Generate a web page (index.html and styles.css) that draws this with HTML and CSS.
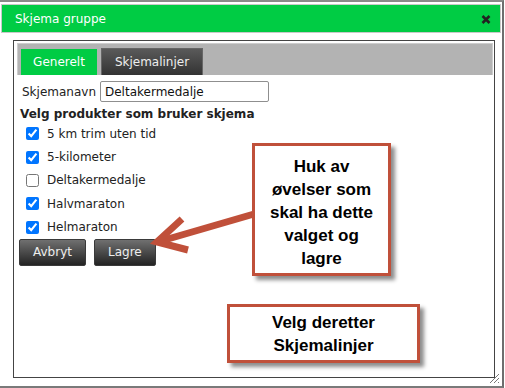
FILE: index.html
```html
<!DOCTYPE html>
<html lang="no">
<head>
    <meta charset="UTF-8">
    <meta name="viewport" content="width=device-width, initial-scale=1.0">
    <title>Skjema gruppe</title>
    <link rel="stylesheet" href="styles.css">
</head>
<body>
    <div class="dialog">
        <div class="titlebar">
            <span class="title">Skjema gruppe</span>
            <svg class="close" width="10" height="9" viewBox="0 0 10 9">
                <path d="M1.5 1 L8.5 8 M8.5 1 L1.5 8" stroke="#222" stroke-width="2.6"/>
            </svg>
        </div>

        <div class="panel">
            <div class="tabs">
                <span class="tab active">Generelt</span>
                <span class="tab">Skjemalinjer</span>
            </div>

            <div class="name-row">
                <label for="skjemanavn">Skjemanavn</label>
                <input id="skjemanavn" class="text-input" type="text" value="Deltakermedalje">
            </div>

            <div class="heading">Velg produkter som bruker skjema</div>

            <ul class="products">
                <li><input type="checkbox" checked><span>5 km trim uten tid</span></li>
                <li><input type="checkbox" checked><span>5-kilometer</span></li>
                <li><input type="checkbox"><span>Deltakermedalje</span></li>
                <li><input type="checkbox" checked><span>Halvmaraton</span></li>
                <li><input type="checkbox" checked><span>Helmaraton</span></li>
            </ul>

            <div class="actions">
                <button class="dark-button">Avbryt</button>
                <button class="dark-button">Lagre</button>
            </div>
        </div>

        <svg class="grip" width="12" height="12" viewBox="0 0 12 12">
            <path d="M11 2 L2 11 M11 6 L6 11 M11 10 L10 11" stroke="#777" stroke-width="1"/>
        </svg>

        <!-- annotasjoner -->
        <svg class="arrow" width="505" height="388" viewBox="0 0 505 388">
            <path d="M254 214 L161 241" stroke="#c0503a" stroke-width="7" fill="none"/>
            <path d="M182 219 L157 242 L188 250" stroke="#c0503a" stroke-width="7" fill="none" stroke-linejoin="miter"/>
        </svg>

        <div class="note note-main">Huk av<br>øvelser som<br>skal ha dette<br>valget og<br>lagre</div>
        <div class="note note-next">Velg deretter<br>Skjemalinjer</div>
    </div>
</body>
</html>
```

FILE: styles.css
```css
body {
    margin: 0;
    background: #fff;
    font-family: "DejaVu Sans", Verdana, sans-serif;
    font-size: 12px;
    color: #222;
}

.dialog {
    position: relative;
    width: 502px;
    height: 384px;
    border-top: 2px solid #8a8a8a;
    border-right: 2px solid #6e6e6e;
    border-bottom: 2px solid #7a7a7a;
    background: #fff;
}

.titlebar {
    margin: 2px 1px 0 1px;
    height: 27px;
    border: 1px solid #c9c9c9;
    background: #00cc44;
    display: flex;
    align-items: center;
    justify-content: space-between;
    padding: 0 9px 0 13px;
}

.title {
    color: #fff;
    font-size: 12px;
}

.close {
    display: block;
    margin-top: 2px;
}

.panel {
    margin: 7px 0 0 13px;
    width: 475px;
    height: 334px;
    border: 1px solid #444;
    padding: 2px 2px 0 3px;
    box-sizing: content-box;
}

.panel > * {
    box-sizing: border-box;
}

.tabs {
    height: 32px;
    background: #b3b3b3;
    border: 1px solid #cdcdcd;
    border-bottom: none;
    margin-right: -1px;
    padding: 0 3px;
    display: flex;
    align-items: flex-end;
    gap: 4px;
}

.tab {
    height: 27px;
    width: 102px;
    border: 1px solid #666;
    border-bottom: none;
    box-sizing: border-box;
    background: linear-gradient(#5a5a5a, #333);
    color: #eee;
    display: flex;
    align-items: center;
    justify-content: center;
}

.tab.active {
    height: 26px;
    width: 76px;
    border: none;
    background: #00cc44;
    color: #fff;
}

.name-row {
    margin: 6px 0 0 5px;
    display: flex;
    align-items: center;
    gap: 4px;
}

.text-input {
    width: 169px;
    height: 21px;
    box-sizing: border-box;
    border: 1px solid #8f8f8f;
    border-radius: 2px;
    padding: 0 4px;
    font-family: "DejaVu Sans", Verdana, sans-serif;
    font-size: 12px;
    color: #111;
}

.heading {
    margin: 4px 0 0 3px;
    line-height: 16px;
    font-weight: bold;
    color: #222;
}

.products {
    list-style: none;
    margin: 0;
    padding: 0 0 0 9px;
}

.products li {
    height: 23.4px;
    display: flex;
    align-items: center;
    gap: 8px;
}

.products input {
    margin: 0;
    width: 13px;
    height: 13px;
}

.actions {
    margin-left: 2px;
    display: flex;
    gap: 8px;
}

.dark-button {
    height: 27px;
    padding: 0 13px;
    border: 1px solid #3a3a3a;
    border-radius: 2px;
    background: linear-gradient(#707070, #232323);
    color: #eee;
    font-family: "DejaVu Sans", Verdana, sans-serif;
    font-size: 12px;
    cursor: pointer;
}

.grip {
    position: absolute;
    right: 2px;
    bottom: 2px;
}

.arrow {
    position: absolute;
    top: -2px;
    left: 0;
    pointer-events: none;
}

.note {
    position: absolute;
    box-sizing: border-box;
    border: 3px solid #c0503a;
    background: #fff;
    box-shadow: 4px 4px 4px rgba(0, 0, 0, 0.45);
    font-family: "Liberation Sans", Arial, sans-serif;
    font-weight: bold;
    font-size: 17px;
    line-height: 23px;
    color: #000;
    text-align: center;
    display: flex;
    align-items: center;
    justify-content: center;
}

.note-main {
    left: 252px;
    top: 141px;
    width: 139px;
    height: 133px;
    padding-top: 6px;
}

.note-next {
    left: 227px;
    top: 302px;
    width: 193px;
    height: 59px;
}
```
